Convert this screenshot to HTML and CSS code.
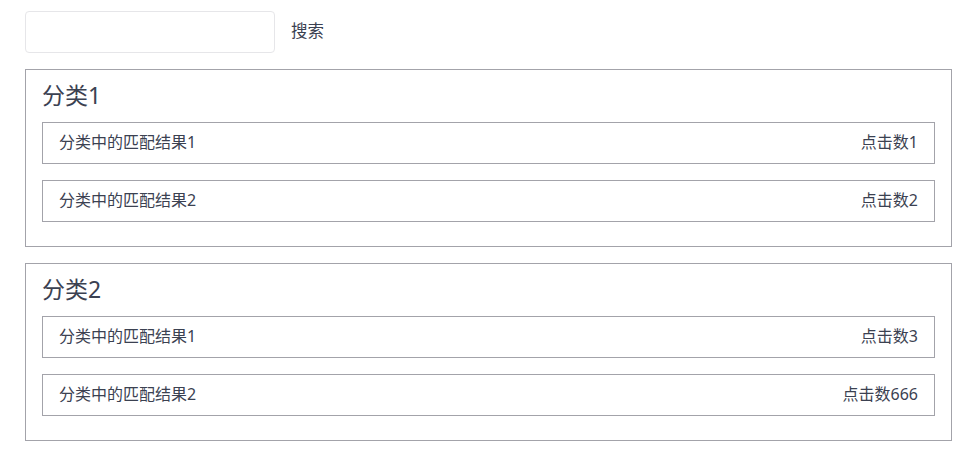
FILE: index.html
```html
<!DOCTYPE html>
<html lang="zh">
<head>
<meta charset="utf-8">
<link rel="stylesheet" href="styles.css">
</head>
<body>
<div class="page">
  <div class="search-row">
    <input class="search-input" type="text">
    <span class="search-btn">搜索</span>
  </div>
  <section class="category">
    <h2 class="cat-title">分类1</h2>
    <div class="item"><span>分类中的匹配结果1</span><span>点击数1</span></div>
    <div class="item"><span>分类中的匹配结果2</span><span>点击数2</span></div>
  </section>
  <section class="category">
    <h2 class="cat-title">分类2</h2>
    <div class="item"><span>分类中的匹配结果1</span><span>点击数3</span></div>
    <div class="item"><span>分类中的匹配结果2</span><span>点击数666</span></div>
  </section>
</div>
</body>
</html>
```
FILE: styles.css
```css
html, body {
  margin: 0;
  padding: 0;
  background: #fff;
}
body {
  font-family: "Noto Sans", "Noto Sans CJK SC", sans-serif;
  color: #3b4151;
}
.page {
  padding: 11px 28px 20px 25px;
}
.search-row {
  display: flex;
  align-items: center;
  gap: 16px;
  margin-bottom: 16px;
}
.search-input {
  box-sizing: border-box;
  width: 250px;
  height: 42px;
  border: 1px solid #e6e6e9;
  border-radius: 4px;
  outline: none;
  margin: 0;
  padding: 0 10px;
}
.search-btn {
  font-size: 16.5px;
  line-height: 24px;
  padding-bottom: 2px;
  color: #3b4151;
}
.category {
  border: 1px solid #a3a3aa;
  padding: 10px 16px 24px 16px;
  margin-bottom: 16px;
}
.cat-title {
  margin: 0 0 12px 0;
  font-size: 23px;
  font-weight: 400;
  line-height: 30px;
}
.item {
  box-sizing: border-box;
  height: 42px;
  border: 1px solid #a3a3aa;
  display: flex;
  justify-content: space-between;
  align-items: center;
  padding: 0 16px 3px 16px;
  font-size: 16px;
  line-height: 22px;
}
.item + .item {
  margin-top: 16px;
}
```
